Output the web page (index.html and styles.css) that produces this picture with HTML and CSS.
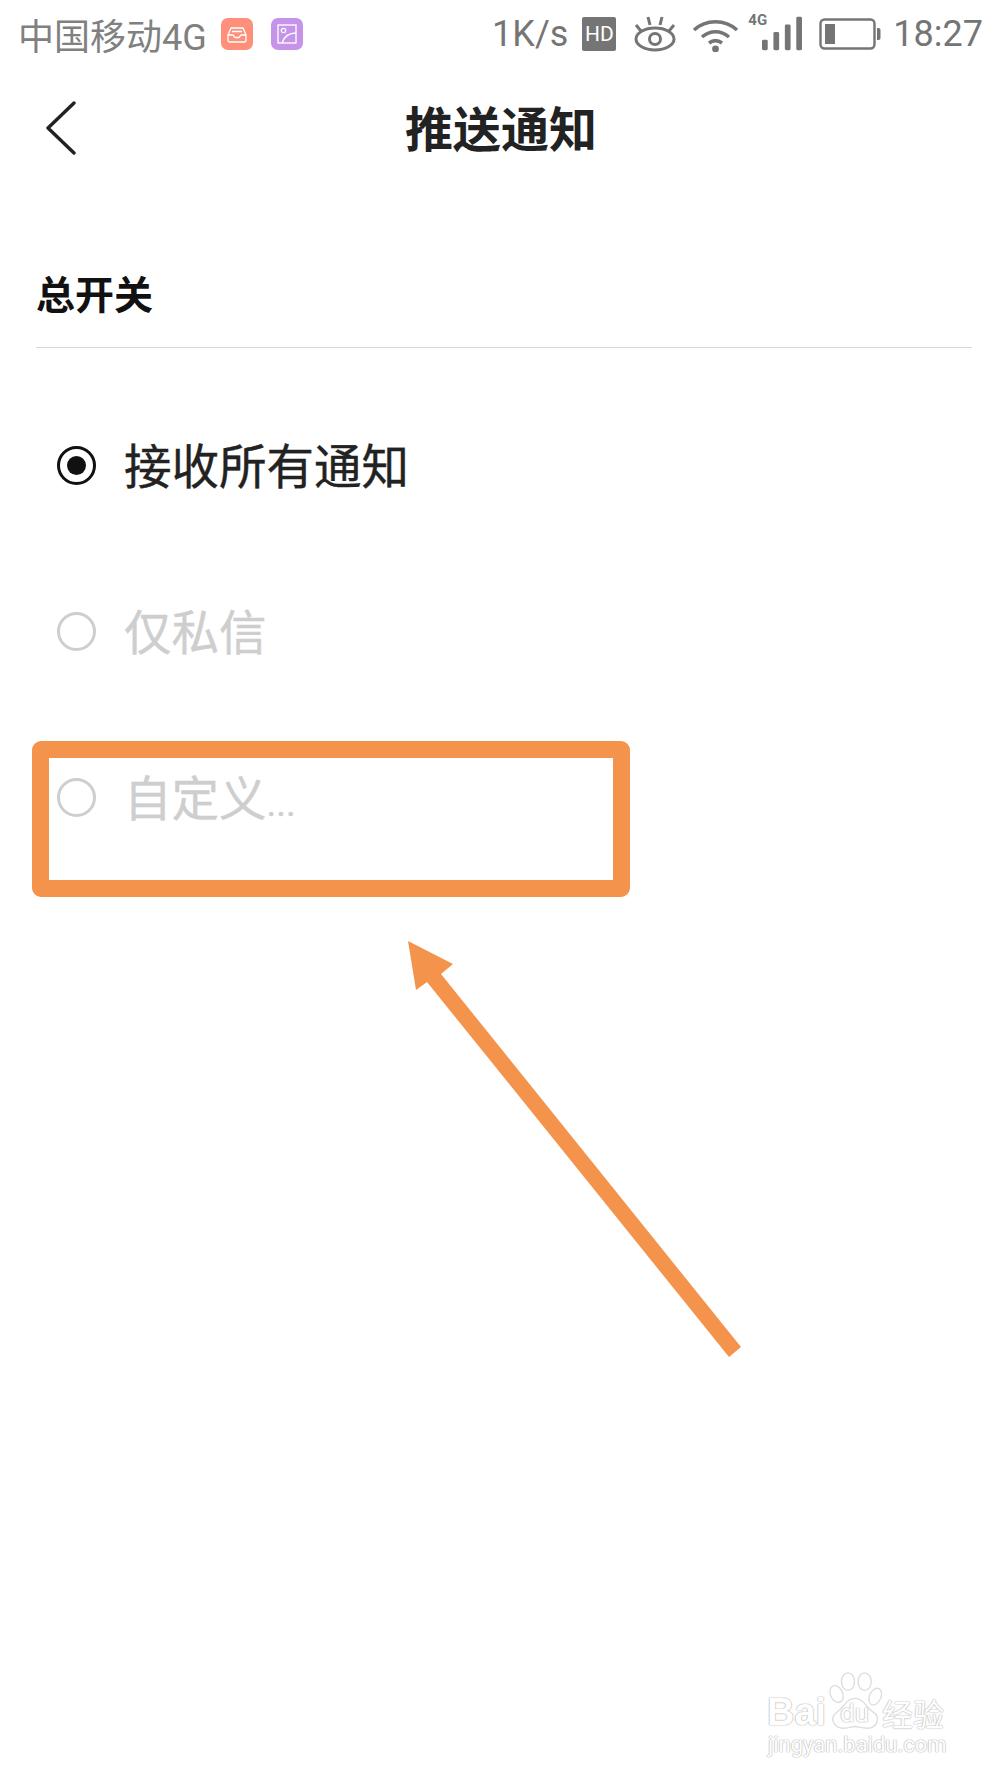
FILE: index.html
```html
<!DOCTYPE html>
<html>

<head>
  <title>推送通知</title>
  <meta charset="utf-8">
  <link rel="stylesheet" href="styles.css">
</head>

<body>

  <div class="status">
    <div class="status__left">
      <span class="carrier">中国移动4G</span>
      <svg class="app-icon" viewBox="0 0 32 32">
        <rect width="32" height="32" rx="7" fill="#fd8f7b" />
        <path d="M7 17 L10 10 H22 L25 17 V22.5 a1.5 1.5 0 0 1 -1.5 1.5 H8.5 A1.5 1.5 0 0 1 7 22.5 Z M7 17 H12 L14 19.5 H18 L20 17 H25 M11 13.5 H21" fill="none" stroke="#fff" stroke-width="1.3" />
      </svg>
      <svg class="app-icon" viewBox="0 0 32 32">
        <rect width="32" height="32" rx="7" fill="#c594ea" />
        <rect x="7" y="7" width="18" height="18" fill="none" stroke="#fff" stroke-width="1.3" />
        <circle cx="12.5" cy="12.5" r="2.2" fill="none" stroke="#fff" stroke-width="1.2" />
        <path d="M11 25 C13 19 18 15 25 15" fill="none" stroke="#fff" stroke-width="1.3" />
      </svg>
    </div>
    <div class="status__right">
      <span class="speed">1K/s</span>
      <span class="hd">HD</span>
      <svg class="ico-eye" viewBox="0 0 44 36">
        <ellipse cx="22" cy="23" rx="19" ry="11" fill="none" stroke="#757575" stroke-width="3" />
        <circle cx="22" cy="23" r="5.5" fill="none" stroke="#757575" stroke-width="3" />
        <path d="M3 9 L8 15 M15 1 L17 9 M29 1 L27 9 M41 9 L36 15" stroke="#757575" stroke-width="3" fill="none" />
      </svg>
      <svg class="ico-wifi" viewBox="0 0 47 36">
        <path d="M2 14 C14 3 33 3 45 14 M10 21 C18 14 29 14 37 21 M17 27 C21 24 26 24 30 27" fill="none" stroke="#757575" stroke-width="3.6" />
        <circle cx="23.5" cy="33" r="3.4" fill="#757575" />
      </svg>
      <div class="signal">
        <span class="signal__tag">4G</span>
        <svg class="ico-bars" viewBox="0 0 42 36">
          <rect x="0" y="24" width="6" height="11" rx="1.5" fill="#757575" />
          <rect x="12" y="16" width="6" height="19" rx="1.5" fill="#757575" />
          <rect x="24" y="8" width="6" height="27" rx="1.5" fill="#757575" />
          <rect x="36" y="0" width="6" height="35" rx="1.5" fill="#757575" />
        </svg>
      </div>
      <svg class="ico-battery" viewBox="0 0 62 32">
        <rect x="1.5" y="1.5" width="54" height="29" rx="4" fill="none" stroke="#757575" stroke-width="2.4" />
        <rect x="6" y="6" width="10" height="20" fill="#757575" />
        <path d="M58 10 h1.5 a2 2 0 0 1 2 2 v8 a2 2 0 0 1 -2 2 h-1.5 Z" fill="#757575" />
      </svg>
      <span class="clock">18:27</span>
    </div>
  </div>

  <div class="nav">
    <svg class="nav__back" viewBox="0 0 30 54">
      <path d="M28 2 L2 27 L28 52" fill="none" stroke="#222" stroke-width="3.4" stroke-linecap="round" stroke-linejoin="round" />
    </svg>
    <h1 class="nav__title">推送通知</h1>
  </div>

  <h2 class="section">总开关</h2>

  <ul class="options">
    <li class="option option--on"><span class="radio"></span><span class="option__text">接收所有通知</span></li>
    <li class="option"><span class="radio"></span><span class="option__text">仅私信</span></li>
    <li class="option"><span class="radio"></span><span class="option__text">自定义<span class="dots">...</span></span></li>
  </ul>

  <!-- marcacao por cima da tela -->
  <div class="mark-box"></div>
  <svg class="mark-arrow" viewBox="0 0 1000 1778">
    <polygon points="408,941 453,964 441,974 741,1347 729,1357 427,982 416,990" fill="#f4934b" />
  </svg>

  <div class="stamp">
    <svg class="stamp__paw" viewBox="0 0 60 66">
      <ellipse cx="9" cy="25" rx="7" ry="10" transform="rotate(-25 9 25)" />
      <ellipse cx="22" cy="11" rx="7.5" ry="10" />
      <ellipse cx="41" cy="11" rx="7.5" ry="10" />
      <ellipse cx="53" cy="28" rx="6.5" ry="10" transform="rotate(25 53 28)" />
      <path d="M30 30 C20 30 18 40 9 46 C1 52 5 64 17 64 C24 64 26 62 30 62 C34 62 37 64 44 64 C56 64 59 51 51 46 C42 40 40 30 30 30 Z" />
    </svg>
    <span class="stamp__brand">Bai</span>
    <span class="stamp__du">du</span>
    <span class="stamp__cn">经验</span>
    <span class="stamp__url">jingyan.baidu.com</span>
  </div>

</body>

</html>
```

FILE: styles.css
```css
body {
  margin: 0;
  background-color: #fff;
  font-family: "Roboto", "Noto Sans CJK SC", sans-serif;
  color: #222;
}

/* barra de status */
.status {
  display: flex;
  justify-content: space-between;
  align-items: center;
  height: 68px;
  padding: 0 17px 0 18px;
  color: #757575;
  font-size: 36px;
}

.status__left,
.status__right {
  display: flex;
  align-items: center;
}

.carrier {
  color: #808080;
  margin-right: 14px;
}

.app-icon {
  width: 32px;
  height: 32px;
  margin-right: 18px;
}

.speed {
  margin-right: 14px;
}

.hd {
  width: 34px;
  height: 34px;
  margin-right: 17px;
  background-color: #757575;
  border-radius: 2px;
  color: #fff;
  font-size: 21px;
  line-height: 34px;
  text-align: center;
}

.ico-eye {
  width: 44px;
  height: 36px;
  margin-right: 15px;
}

.ico-wifi {
  width: 47px;
  height: 36px;
  margin-right: 9px;
}

.signal {
  position: relative;
  width: 54px;
  height: 36px;
  margin-right: 17px;
  display: flex;
  justify-content: flex-end;
}

.signal__tag {
  position: absolute;
  left: 0;
  top: -5px;
  font-size: 15px;
  font-weight: 700;
  line-height: 18px;
}

.ico-bars {
  width: 40px;
  height: 36px;
}

.ico-battery {
  width: 62px;
  height: 32px;
  margin-right: 12px;
}

/* topo */
.nav {
  display: flex;
  align-items: center;
  justify-content: center;
  position: relative;
  height: 122px;
}

.nav__back {
  position: absolute;
  left: 46px;
  top: 33px;
  width: 30px;
  height: 54px;
}

.nav__title {
  margin: 4px 0 0 2px;
  font-size: 48px;
  font-weight: 700;
  line-height: 118px;
}

.section {
  margin: 0 28px 0 36px;
  padding: 85px 0 30px;
  border-bottom: 1px solid #d8d8d8;
  color: #111;
  font-size: 39px;
  font-weight: 700;
  line-height: 42px;
}

/* opcoes */
.options {
  list-style: none;
  margin: 34px 0 0;
  padding: 0 0 0 57px;
}

.option {
  display: flex;
  align-items: center;
  height: 166px;
  color: #cecece;
  font-size: 47.5px;
  -webkit-text-stroke: 0.4px;
}

.option--on {
  color: #222;
}

.option__text {
  margin-bottom: 4px;
}

.dots {
  font-size: 37px;
}

.radio {
  position: relative;
  box-sizing: border-box;
  width: 39px;
  height: 39px;
  margin-right: 28px;
  border: 3px solid #cecece;
  border-radius: 50%;
}

.option--on .radio {
  border-color: #111;
}

.option--on .radio:after {
  content: "";
  position: absolute;
  top: 7px;
  left: 7px;
  width: 19px;
  height: 19px;
  background-color: #111;
  border-radius: 50%;
}

/* marcacao laranja */
.mark-box {
  position: absolute;
  left: 32px;
  top: 741px;
  box-sizing: border-box;
  width: 598px;
  height: 156px;
  border: 17px solid #f4934b;
  border-radius: 9px;
}

.mark-arrow {
  position: absolute;
  left: 0;
  top: 0;
  width: 1000px;
  height: 1778px;
}

/* marca d'agua */
.stamp {
  position: absolute;
  left: 766px;
  top: 1670px;
  width: 180px;
  height: 92px;
  color: #fff;
  line-height: 1;
  white-space: nowrap;
  text-shadow: 0 0 1px #b5b5b5, 0 0 1px #b5b5b5, 0 0 2px #d0d0d0;
}

.stamp__paw {
  position: absolute;
  left: 62px;
  top: 2px;
  width: 54px;
  height: 58px;
  fill: #fff;
  stroke: #dcdcdc;
  stroke-width: 1.5;
}

.stamp__brand,
.stamp__du,
.stamp__cn,
.stamp__url {
  position: absolute;
}

.stamp__brand {
  left: 1px;
  top: 23px;
  font-size: 38px;
  font-family: "Liberation Sans", sans-serif;
  font-weight: 700;
}

.stamp__du {
  left: 74px;
  top: 30px;
  font-size: 26px;
}

.stamp__cn {
  left: 116px;
  top: 27px;
  font-size: 31px;
  font-family: "Noto Sans CJK SC", sans-serif;
}

.stamp__url {
  left: 2px;
  top: 64px;
  font-size: 22px;
}
```
